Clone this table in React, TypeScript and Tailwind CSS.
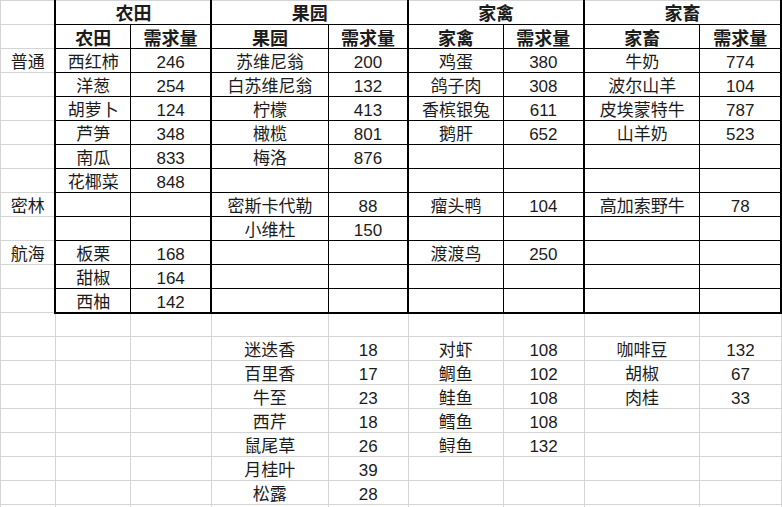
import React from 'react'

// column widths in px, taken from the sheet's grid lines
const widths = [55, 75, 81, 117, 80, 95, 81, 116, 81]

const groups = ['农田', '果园', '家禽', '家畜']

// rows below the group header
const rows: string[][] = [
  ['', '农田', '需求量', '果园', '需求量', '家禽', '需求量', '家畜', '需求量'],
  ['普通', '西红柿', '246', '苏维尼翁', '200', '鸡蛋', '380', '牛奶', '774'],
  ['', '洋葱', '254', '白苏维尼翁', '132', '鸽子肉', '308', '波尔山羊', '104'],
  ['', '胡萝卜', '124', '柠檬', '413', '香槟银兔', '611', '皮埃蒙特牛', '787'],
  ['', '芦笋', '348', '橄榄', '801', '鹅肝', '652', '山羊奶', '523'],
  ['', '南瓜', '833', '梅洛', '876', '', '', '', ''],
  ['', '花椰菜', '848', '', '', '', '', '', ''],
  ['密林', '', '', '密斯卡代勒', '88', '瘤头鸭', '104', '高加索野牛', '78'],
  ['', '', '', '小维杜', '150', '', '', '', ''],
  ['航海', '板栗', '168', '', '', '渡渡鸟', '250', '', ''],
  ['', '甜椒', '164', '', '', '', '', '', ''],
  ['', '西柚', '142', '', '', '', '', '', ''],
  ['', '', '', '', '', '', '', '', ''],
  ['', '', '', '迷迭香', '18', '对虾', '108', '咖啡豆', '132'],
  ['', '', '', '百里香', '17', '鲷鱼', '102', '胡椒', '67'],
  ['', '', '', '牛至', '23', '鲑鱼', '108', '肉桂', '33'],
  ['', '', '', '西芹', '18', '鳕鱼', '108', '', ''],
  ['', '', '', '鼠尾草', '26', '鲟鱼', '132', '', ''],
  ['', '', '', '月桂叶', '39', '', '', '', ''],
  ['', '', '', '松露', '28', '', '', '', ''],
  ['', '', '', '', '', '', '', '', ''],
]

function cellClass(r: number, c: number) {
  const boxed = c >= 1 && r <= 12
  if (!boxed) return 'border border-[#d4d4d4]'
  return [
    'border border-black',
    c % 2 === 1 ? 'border-l-2' : '',
    c === 8 ? 'border-r-2' : '',
    r === 12 ? 'border-b-2' : '',
    r === 0 ? 'border-t-[#d4d4d4]' : '',
  ].join(' ')
}

export default function App() {
  return (
    <div className="h-[507px] w-[782px] overflow-hidden bg-white font-['Liberation_Sans','Noto_Sans_CJK_SC',sans-serif] text-[17px] text-[#1c1c1c]">
      <table className="table-fixed border-collapse">
        <colgroup>
          {widths.map((w, i) => (
            <col key={i} style={{ width: w }} />
          ))}
        </colgroup>
        <tbody>
          <tr className="h-[24px]">
            <td className={cellClass(0, 0)} />
            {groups.map((g, i) => (
              <td
                key={g}
                colSpan={2}
                className={`${cellClass(0, i * 2 + 1)} ${i === 3 ? 'border-r-2' : ''} p-0 pt-[3px] text-center text-[18px] font-bold leading-none`}
              >
                {g}
              </td>
            ))}
          </tr>
          {rows.map((row, ri) => {
            const r = ri + 1
            return (
              <tr key={r} className="h-[24px]">
                {row.map((v, c) => (
                  <td
                    key={c}
                    className={`${cellClass(r, c)} p-0 pt-[4px] text-center leading-none whitespace-nowrap ${r === 1 ? 'text-[18px] font-bold' : ''}`}
                  >
                    {v}
                  </td>
                ))}
              </tr>
            )
          })}
        </tbody>
      </table>
    </div>
  )
}
